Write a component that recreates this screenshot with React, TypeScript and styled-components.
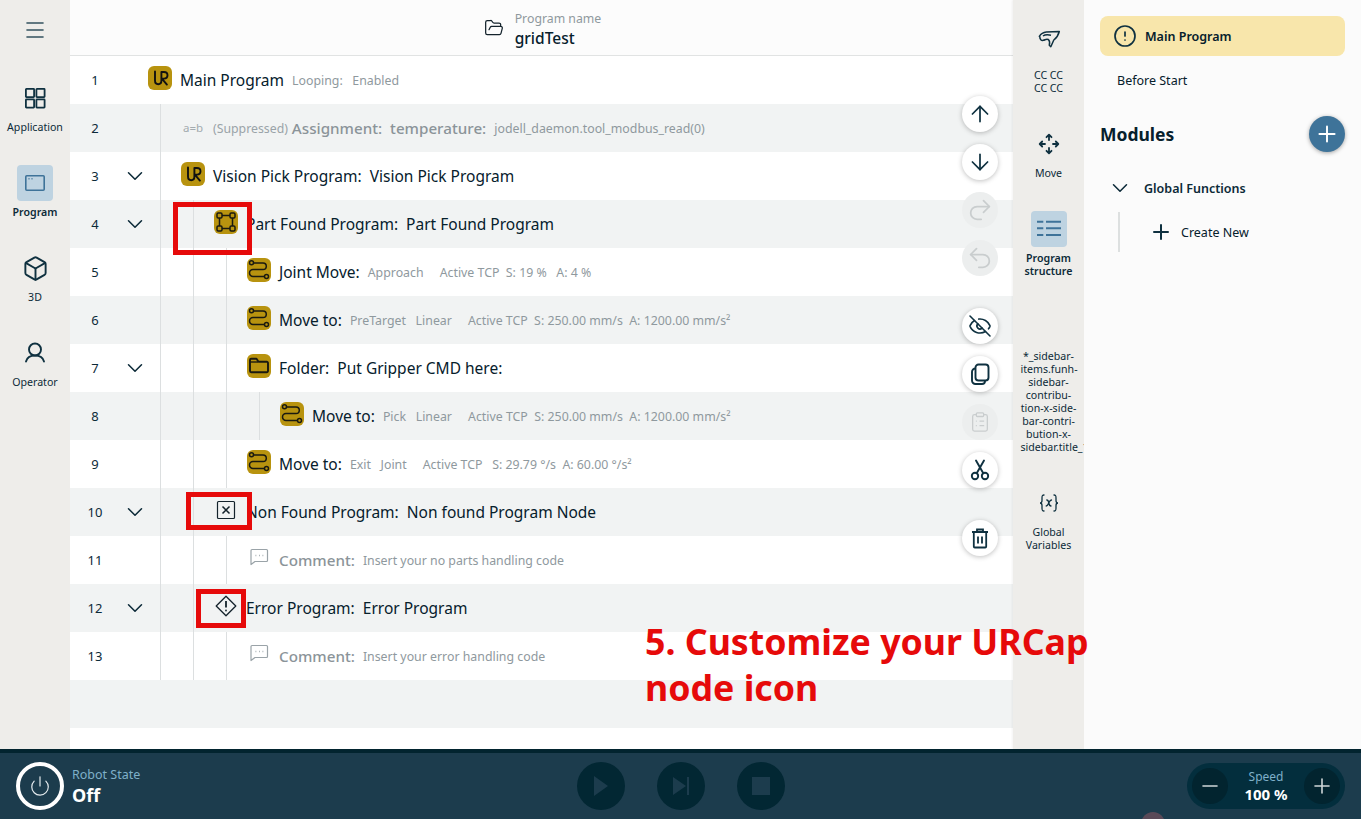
import React, { FC, ReactNode } from 'react';
import styled, { createGlobalStyle } from 'styled-components';
import {
  ArrowDown, ArrowUp, ChevronDown, ClipboardList, EyeOff, FolderOpen, Menu, Minus,
  Plus, Redo2, Undo2, Box, AlertCircle, Power,
} from 'lucide-react';

const GlobalStyle = createGlobalStyle`
  html, body {
    margin: 0;
    padding: 0;
    height: 100%;
    overflow: hidden;
  }
  body {
    font-family: "Noto Sans", "Open Sans", sans-serif;
    color: #06202c;
  }
`;

const ink = '#0f3140';

const UrLogo = () => (
  <svg width="24" height="24" viewBox="0 0 24 24" fill="none" stroke="#111" strokeWidth="1.9" strokeLinecap="round" strokeLinejoin="round">
    <path d="M7 5.500v9c0 2.500 1.300 3.700 3.200 3.700s3.200-1.200 3.200-3.700V6h2.500c2.400 0 3.600 1.300 3.600 3.300s-1.200 3.300-3.600 3.300h-2l5 6" />
  </svg>
);

const GridNodeGlyph = () => (
  <svg width="24" height="24" viewBox="0 0 24 24" fill="none" stroke="#1a1a10" strokeWidth="1.5">
    <path d="M5.500 8v8M18.500 8v8M8 5.500h8M8 18.500h8" />
    <rect x="3" y="3" width="5" height="5" rx="1.200" />
    <rect x="16" y="3" width="5" height="5" rx="1.200" />
    <rect x="3" y="16" width="5" height="5" rx="1.200" />
    <rect x="16" y="16" width="5" height="5" rx="1.200" />
  </svg>
);

const PathGlyph = () => (
  <svg width="24" height="24" viewBox="0 0 24 24" fill="none" stroke="#1a1a10" strokeWidth="1.5">
    <circle cx="4.500" cy="4.800" r="2" />
    <circle cx="19.500" cy="18.500" r="2" />
    <path d="M6.500 5h9.500a3.300 3.300 0 0 1 0 6.600H6a3.500 3.500 0 0 0 0 7h11.500" />
  </svg>
);

const FolderGlyph = () => (
  <svg width="24" height="24" viewBox="0 0 24 24" fill="none" stroke="#1a1a10" strokeWidth="1.9" strokeLinejoin="round">
    <path d="M3 6a1.200 1.200 0 0 1 1.200-1.200h5.300l2 3h8.300a1.200 1.200 0 0 1 1.200 1.200v8a1.200 1.200 0 0 1-1.200 1.200H4.200A1.200 1.200 0 0 1 3 17z" />
    <path d="M3 8h8" strokeWidth="1.400" />
  </svg>
);

const CloseBoxGlyph = () => (
  <svg width="24" height="24" viewBox="0 0 24 24" fill="none" stroke="#14232c" strokeWidth="1.200">
    <rect x="3.500" y="3.500" width="17" height="17" rx="1" />
    <path d="M8.500 8.500l7 7M15.500 8.500l-7 7" strokeWidth="1.500" />
  </svg>
);

const DiamondGlyph = () => (
  <svg width="24" height="24" viewBox="0 0 24 24" fill="none" stroke="#14232c" strokeWidth="1.300" strokeLinejoin="round">
    <path d="M12 2.200l9.800 9.800-9.800 9.800-9.800-9.800z" />
    <path d="M12 7v6.500" strokeWidth="1.800" />
    <circle cx="12" cy="16.500" r="0.900" fill="#14232c" stroke="none" />
  </svg>
);

const CommentGlyph = () => (
  <svg width="24" height="24" viewBox="0 0 24 24" fill="none" stroke="#9aa3a8" strokeWidth="1.200" strokeLinejoin="round">
    <path d="M5 3.500h14.500a1 1 0 0 1 1 1v10a1 1 0 0 1-1 1H8l-4 3V4.500a1 1 0 0 1 1-1z" />
    <path d="M8.500 9.500h.8M12 9.500h.8M15.500 9.500h.8" strokeWidth="1.400" />
  </svg>
);

const ApplicationGlyph = () => (
  <svg width="24" height="24" viewBox="0 0 24 24" fill="none" stroke={ink} strokeWidth="1.800">
    <rect x="2.900" y="2.900" width="8.200" height="8.200" rx="0.500" />
    <rect x="13.400" y="2.900" width="8.200" height="8.200" rx="0.500" />
    <rect x="2.900" y="13.400" width="8.200" height="8.200" rx="0.500" />
    <rect x="13.400" y="13.400" width="8.200" height="8.200" rx="0.500" />
  </svg>
);

const ProgramGlyph = () => (
  <svg width="24" height="24" viewBox="0 0 24 24" fill="none" stroke="#3e7399" strokeWidth="1.600">
    <rect x="2.800" y="4.800" width="18.400" height="14.400" rx="1" />
    <path d="M5.500 7.800h1M8.500 7.800h1" strokeWidth="1.500" />
  </svg>
);

const OperatorGlyph = () => (
  <svg width="24" height="24" viewBox="0 0 24 24" fill="none" stroke={ink} strokeWidth="1.900" strokeLinecap="round">
    <circle cx="12" cy="8.500" r="6" />
    <path d="M3 20.500c1-4 5-6 9-6s8 2 9 6" />
  </svg>
);

const GripperGlyph = () => (
  <svg width="24" height="24" viewBox="0 0 24 24" fill="none" stroke={ink} strokeWidth="1.500" strokeLinejoin="round">
    <path d="M2.300 8.300c2-3 5-4 7-4.200l13-.6c-1 4-3.500 7-5.500 8.500l-3 6.700-1.500-1.500c.5-2 .5-4.500-1-5.700-2-1-3 .3-5 .8s-3.500-1-3.500-3.500z" />
    <path d="M6 8c2-1.500 5-1.500 8-.8" />
  </svg>
);

const MoveGlyph = () => (
  <svg width="24" height="24" viewBox="0 0 24 24" fill="none" stroke={ink} strokeWidth="1.800" strokeLinecap="round" strokeLinejoin="round">
    <path d="M12 3v5M9.500 5.200L12 2.700l2.500 2.500" />
    <path d="M12 21v-5M9.500 18.800l2.500 2.500 2.500-2.500" />
    <path d="M3 12h5M5.200 9.500L2.700 12l2.500 2.500" />
    <path d="M21 12h-5M18.800 9.500l2.500 2.500-2.500 2.500" />
  </svg>
);

const StructureGlyph = () => (
  <svg width="24" height="24" viewBox="0 0 24 24" fill="none" stroke="#3e7399" strokeWidth="2">
    <path d="M0 4.700h6.300M9 4.700h15M0 11.300h6.300M9 11.300h15M0 18h6.300M9 18h15" />
  </svg>
);

const VariablesGlyph = () => (
  <svg width="24" height="24" viewBox="0 0 24 24" fill="none" stroke={ink} strokeWidth="1.300" strokeLinecap="round">
    <path d="M7 4c-2 0-2 1-2 3v2.500c0 1.500-.6 2.500-2 2.500 1.400 0 2 1 2 2.500V17c0 2 0 3 2 3" />
    <path d="M17 4c2 0 2 1 2 3v2.500c0 1.500.6 2.500 2 2.500-1.400 0-2 1-2 2.500V17c0 2 0 3-2 3" />
    <path d="M9.800 9c1.500 0 1.600 1 2 3s.6 3 2.200 3M14.500 9c-1.500 0-2.500 2.500-2.800 3-.3.500-1 3-2.500 3" />
  </svg>
);

const CopyGlyph = () => (
  <svg width="24" height="24" viewBox="0 0 24 24" fill="none" stroke="currentColor" strokeWidth="1.900">
    <path d="M10.500 2.500h7a3 3 0 0 1 3 3v10a3 3 0 0 1-3 3h-7a3 3 0 0 1-3-3v-10a3 3 0 0 1 3-3z" />
    <path d="M7.500 6.500a3.500 3.500 0 0 0-3.500 3.500v8.500a3.500 3.500 0 0 0 3.500 3.500h6.500a3 3 0 0 0 3-3" />
  </svg>
);

const ScissorsGlyph = () => (
  <svg width="24" height="24" viewBox="0 0 24 24" fill="none" stroke="currentColor" strokeWidth="1.900" strokeLinecap="round">
    <circle cx="7" cy="18" r="3.200" />
    <circle cx="17" cy="18" r="3.200" />
    <path d="M8.700 15.300L16 2.500M15.300 15.300L8 2.500" />
  </svg>
);

const TrashGlyph = () => (
  <svg width="24" height="24" viewBox="0 0 24 24" fill="none" stroke="currentColor" strokeWidth="1.800">
    <path d="M4 6h16M9 6V3.500h6V6" />
    <path d="M5.800 6v14.500a1 1 0 0 0 1 1h10.400a1 1 0 0 0 1-1V6" />
    <path d="M10 10.500v7M14 10.500v7" />
  </svg>
);

const Page = styled.div`
  width: 1361px;
  height: 819px;
  display: grid;
  grid-template-columns: 70px 943px 71px 277px;
  grid-template-rows: 749px 70px;
  position: relative;
  overflow: hidden;
  background: #fff;
`;

const LeftRail = styled.nav`
  background: #eeedea;
  display: flex;
  flex-direction: column;
  align-items: center;
`;

const MenuButton = styled.div`
  height: 60px;
  margin-bottom: 20px;
  display: flex;
  align-items: center;
  color: #33525f;
`;

const RailItem = styled.div`
  height: 85px;
  width: 100%;
  display: flex;
  flex-direction: column;
  align-items: center;
`;

const RailIcon = styled.div<{ $active?: boolean }>`
  width: 36px;
  height: 36px;
  border-radius: 4px;
  display: flex;
  align-items: center;
  justify-content: center;
  background: ${p => (p.$active ? '#bed3e1' : 'transparent')};
`;

const RailLabel = styled.div<{ $active?: boolean }>`
  margin-top: 5px;
  font-size: 10.600px;
  line-height: 13px;
  text-align: center;
  font-weight: ${p => (p.$active ? 600 : 400)};
  color: #0c2a38;
`;

const Main = styled.main`
  display: flex;
  flex-direction: column;
  position: relative;
  min-width: 0;
`;

const Header = styled.header`
  height: 55px;
  flex: none;
  background: #fcfcfc;
  border-bottom: 1px solid #e1e3e3;
  display: flex;
  justify-content: center;
  align-items: center;
  gap: 11px;
  padding-left: 2px;
`;

const HeaderText = styled.div`
  display: flex;
  flex-direction: column;
  padding-top: 4px;
`;

const HeaderCaption = styled.span`
  font-size: 12.300px;
  line-height: 16px;
  color: #8f999e;
`;

const HeaderName = styled.span`
  font-size: 15.500px;
  line-height: 22px;
  font-weight: 500;
  color: #06202c;
`;

const RowList = styled.div`
  display: flex;
  flex-direction: column;
`;

const Row = styled.div<{ $shaded: boolean }>`
  height: 48px;
  display: flex;
  align-items: stretch;
  background: ${p => (p.$shaded ? '#f1f3f3' : '#fff')};
`;

const RowNumber = styled.div`
  width: 50px;
  display: flex;
  align-items: center;
  justify-content: center;
  font-size: 13px;
  color: #0c2a38;
`;

const Chevron = styled.div`
  width: 40px;
  padding-left: 2px;
  box-sizing: border-box;
  display: flex;
  align-items: center;
  color: #0c2a38;
`;

const Guide = styled.div`
  width: 33px;
  flex: none;
  box-sizing: border-box;
  border-left: 1px solid #dcdfe0;
`;

const NodeSlot = styled.div`
  display: flex;
  align-items: center;
  gap: 8px;
  margin-left: -12px;
  min-width: 0;
  white-space: pre;
`;

const NodeIcon = styled.div<{ $gold?: boolean }>`
  width: 24px;
  height: 24px;
  flex: none;
  margin-top: -4px;
  border-radius: 6px;
  background: ${p => (p.$gold ? '#b8930f' : 'transparent')};
  display: flex;
  align-items: center;
  justify-content: center;
`;

const NodeBody = styled.div`
  display: flex;
  align-items: center;
`;

const FormulaGlyph = styled.span`
  font-size: 11.500px;
  margin-top: 2px;
  color: #a3abaf;
`;

const Title = styled.span`
  font-size: 15.500px;
  color: #06202c;
`;

const Meta = styled.span`
  font-size: 12.350px;
  color: #8f999e;
  margin-left: 8px;
`;

const Suppressed = styled.span`
  font-size: 12.300px;
  color: #9aa3a8;
`;

const Muted = styled.span`
  font-size: 15.200px;
  font-weight: 500;
  color: #8b9499;
`;

const FloatColumn = styled.div`
  position: absolute;
  top: 96px;
  right: 15px;
  display: flex;
  flex-direction: column;
  gap: 12px;
`;

const FloatButton = styled.div<{ $off?: boolean; $gapTop?: boolean }>`
  width: 36px;
  height: 36px;
  border-radius: 50%;
  display: flex;
  align-items: center;
  justify-content: center;
  margin-top: ${p => (p.$gapTop ? '20px' : '0')};
  background: ${p => (p.$off ? '#eceeee' : '#fff')};
  box-shadow: ${p => (p.$off ? 'none' : '0 1px 5px rgba(0, 0, 0, 0.25)')};
  color: ${p => (p.$off ? '#c9cdce' : ink)};
`;

const RightRail = styled.aside`
  background: #eeedea;
  box-shadow: -1px 0 2px rgba(0, 0, 0, 0.05);
  z-index: 1;
  display: flex;
  flex-direction: column;
  align-items: center;
  padding-top: 28px;
  box-sizing: border-box;
  overflow: hidden;
`;

const ToolItem = styled.div<{ $height: number }>`
  height: ${p => p.$height}px;
  width: 100%;
  display: flex;
  flex-direction: column;
  align-items: center;
  flex: none;
`;

const ToolLabel = styled.div<{ $active?: boolean; $top?: number }>`
  margin-top: ${p => p.$top ?? 5}px;
  font-size: 10.600px;
  line-height: 13px;
  text-align: center;
  white-space: nowrap;
  font-weight: ${p => (p.$active ? 600 : 400)};
  color: #0c2a38;
`;

const LongToolLabel = styled(ToolLabel)`
  width: 56px;
`;

const SidePanel = styled.aside`
  background: #fbfbfb;
  padding: 16px 16px 0;
  display: flex;
  flex-direction: column;
`;

const MainTab = styled.div`
  height: 40px;
  background: #f8e6ab;
  border-radius: 8px;
  display: flex;
  align-items: center;
  gap: 8px;
  padding-left: 13px;
  font-size: 12.500px;
  font-weight: 600;
`;

const BeforeStart = styled.div`
  height: 48px;
  display: flex;
  align-items: center;
  padding-left: 17px;
  font-size: 12.500px;
`;

const ModulesHead = styled.div`
  margin-top: 12px;
  height: 36px;
  display: flex;
  align-items: center;
  justify-content: space-between;
  font-size: 17.500px;
  font-weight: 700;
`;

const AddButton = styled.div`
  width: 36px;
  height: 36px;
  border-radius: 50%;
  background: #3e7399;
  box-shadow: 0 1px 4px rgba(0, 0, 0, 0.35);
  color: #fff;
  display: flex;
  align-items: center;
  justify-content: center;
`;

const GroupHead = styled.div`
  margin-top: 18px;
  height: 36px;
  display: flex;
  align-items: center;
  gap: 11px;
  padding-left: 7px;
  font-size: 12.500px;
  font-weight: 600;
  color: #0c2a38;
`;

const GroupBody = styled.div`
  margin: 6px 0 0 18px;
  height: 40px;
  border-left: 2px solid #dde0e0;
  display: flex;
  align-items: center;
  gap: 8px;
  padding-left: 29px;
  font-size: 12.500px;
`;

const BottomBar = styled.footer`
  grid-column: 1 / -1;
  background: #1c3c4d;
  border-top: 4px solid #02242f;
  box-sizing: border-box;
  display: grid;
  grid-template-columns: 1fr auto 1fr;
  align-items: center;
  padding: 0 16px;
  position: relative;
  overflow: hidden;
  z-index: 2;
`;

const RobotState = styled.div`
  display: flex;
  align-items: center;
  gap: 8px;
`;

const PowerRing = styled.div`
  width: 48px;
  height: 48px;
  box-sizing: border-box;
  border: 4px solid #fff;
  border-radius: 50%;
  color: #e6ecef;
  display: flex;
  align-items: center;
  justify-content: center;
`;

const StateText = styled.div`
  display: flex;
  flex-direction: column;
  margin-top: 2px;
`;

const StateCaption = styled.span`
  font-size: 12.500px;
  line-height: 16px;
  color: #7fb0c9;
`;

const StateValue = styled.span`
  font-size: 18px;
  line-height: 24px;
  font-weight: 700;
  color: #fff;
`;

const Transport = styled.div`
  display: flex;
  gap: 32px;
`;

const TransportButton = styled.div`
  width: 48px;
  height: 48px;
  border-radius: 50%;
  background: #022733;
  color: #1c3c4d;
  display: flex;
  align-items: center;
  justify-content: center;
`;

const SpeedPill = styled.div`
  justify-self: end;
  width: 158px;
  height: 46px;
  box-sizing: border-box;
  padding: 0 5px;
  border-radius: 23px;
  background: #032e3d;
  display: flex;
  align-items: center;
  justify-content: space-between;
`;

const SpeedButton = styled.div`
  width: 36px;
  height: 36px;
  border-radius: 50%;
  background: #02242f;
  color: #cfd6d9;
  display: flex;
  align-items: center;
  justify-content: center;
`;

const SpeedText = styled.div`
  display: flex;
  flex-direction: column;
  align-items: center;
`;

const SpeedCaption = styled.span`
  font-size: 12px;
  line-height: 16px;
  color: #7fb0c9;
`;

const SpeedValue = styled.span`
  font-size: 15px;
  line-height: 18px;
  font-weight: 700;
  color: #fff;
`;

const CursorBlob = styled.div`
  position: absolute;
  left: 1141px;
  top: 59px;
  width: 24px;
  height: 24px;
  border-radius: 50%;
  background: #5a4a58;
`;

const Marker = styled.div<{ $x: number; $y: number; $w: number; $h: number }>`
  position: absolute;
  left: ${p => p.$x}px;
  top: ${p => p.$y}px;
  width: ${p => p.$w}px;
  height: ${p => p.$h}px;
  box-sizing: border-box;
  border: 5px solid #e60a0a;
  z-index: 3;
`;

const Callout = styled.div`
  position: absolute;
  left: 645px;
  top: 618px;
  font-size: 35.700px;
  line-height: 46px;
  font-weight: 700;
  color: #e60a0a;
  white-space: nowrap;
  z-index: 3;
`;

interface NodeRow {
  n: number;
  depth: number;
  open?: boolean;
  icon?: ReactNode;
  gold?: boolean;
  body: ReactNode;
}

const rows: NodeRow[] = [
  { n: 1, depth: 0, icon: <UrLogo />, gold: true, body: <><Title>Main Program</Title><Meta>{'Looping:   Enabled'}</Meta></> },
  { n: 2, depth: 1, icon: <FormulaGlyph>a=b</FormulaGlyph>, body: <><Suppressed>(Suppressed)</Suppressed><Muted>{' Assignment:  temperature:'}</Muted><Meta>jodell_daemon.tool_modbus_read(0)</Meta></> },
  { n: 3, depth: 1, open: true, icon: <UrLogo />, gold: true, body: <Title>{'Vision Pick Program:  Vision Pick Program'}</Title> },
  { n: 4, depth: 2, open: true, icon: <GridNodeGlyph />, gold: true, body: <Title>{'Part Found Program:  Part Found Program'}</Title> },
  { n: 5, depth: 3, icon: <PathGlyph />, gold: true, body: <><Title>Joint Move:</Title><Meta>{'Approach     Active TCP  S: 19 %   A: 4 %'}</Meta></> },
  { n: 6, depth: 3, icon: <PathGlyph />, gold: true, body: <><Title>Move to:</Title><Meta>{'PreTarget   Linear     Active TCP  S: 250.00 mm/s  A: 1200.00 mm/s²'}</Meta></> },
  { n: 7, depth: 3, open: true, icon: <FolderGlyph />, gold: true, body: <Title>{'Folder:  Put Gripper CMD here:'}</Title> },
  { n: 8, depth: 4, icon: <PathGlyph />, gold: true, body: <><Title>Move to:</Title><Meta>{'Pick   Linear     Active TCP  S: 250.00 mm/s  A: 1200.00 mm/s²'}</Meta></> },
  { n: 9, depth: 3, icon: <PathGlyph />, gold: true, body: <><Title>Move to:</Title><Meta>{'Exit   Joint     Active TCP   S: 29.79 °/s  A: 60.00 °/s²'}</Meta></> },
  { n: 10, depth: 2, open: true, icon: <CloseBoxGlyph />, body: <Title>{'Non Found Program:  Non found Program Node'}</Title> },
  { n: 11, depth: 3, icon: <CommentGlyph />, body: <><Muted>Comment:</Muted><Meta>Insert your no parts handling code</Meta></> },
  { n: 12, depth: 2, open: true, icon: <DiamondGlyph />, body: <Title>{'Error Program:  Error Program'}</Title> },
  { n: 13, depth: 3, icon: <CommentGlyph />, body: <><Muted>Comment:</Muted><Meta>Insert your error handling code</Meta></> },
];

const floatButtons: { icon: ReactNode; off?: boolean; gapTop?: boolean }[] = [
  { icon: <ArrowUp size={26} strokeWidth={1.600} /> },
  { icon: <ArrowDown size={26} strokeWidth={1.600} /> },
  { icon: <Redo2 size={28} strokeWidth={1.500} />, off: true },
  { icon: <Undo2 size={28} strokeWidth={1.500} />, off: true },
  { icon: <EyeOff size={24} strokeWidth={1.600} />, gapTop: true },
  { icon: <CopyGlyph /> },
  { icon: <ClipboardList size={22} strokeWidth={1.400} />, off: true },
  { icon: <ScissorsGlyph /> },
  { icon: <TrashGlyph />, gapTop: true },
];

const sidebarTitle = ['*_sidebar-', 'items.funh-', 'sidebar-', 'contribu-', 'tion-x-side-', 'bar-contri-', 'bution-x-', 'sidebar.title_1'];

export const App: FC = () => (
  <Page>
    <GlobalStyle />

    <LeftRail>
      <MenuButton><Menu size={24} strokeWidth={1.600} /></MenuButton>
      <RailItem>
        <RailIcon><ApplicationGlyph /></RailIcon>
        <RailLabel>Application</RailLabel>
      </RailItem>
      <RailItem>
        <RailIcon $active><ProgramGlyph /></RailIcon>
        <RailLabel $active>Program</RailLabel>
      </RailItem>
      <RailItem>
        <RailIcon><Box size={27} color={ink} strokeWidth={1.700} /></RailIcon>
        <RailLabel>3D</RailLabel>
      </RailItem>
      <RailItem>
        <RailIcon><OperatorGlyph /></RailIcon>
        <RailLabel>Operator</RailLabel>
      </RailItem>
    </LeftRail>

    <Main>
      <Header>
        <FolderOpen size={20} color="#14232c" strokeWidth={1.500} />
        <HeaderText>
          <HeaderCaption>Program name</HeaderCaption>
          <HeaderName>gridTest</HeaderName>
        </HeaderText>
      </Header>
      <RowList>
        {rows.map((r, i) => (
          <Row key={r.n} $shaded={i % 2 === 1}>
            <RowNumber>{r.n}</RowNumber>
            <Chevron>{r.open && <ChevronDown size={26} strokeWidth={1.400} />}</Chevron>
            {Array.from({ length: r.depth }).map((_, g) => <Guide key={g} />)}
            <NodeSlot>
              <NodeIcon $gold={r.gold}>{r.icon}</NodeIcon>
              <NodeBody>{r.body}</NodeBody>
            </NodeSlot>
          </Row>
        ))}
        <Row $shaded />
      </RowList>
      <FloatColumn>
        {floatButtons.map((b, i) => (
          <FloatButton key={i} $off={b.off} $gapTop={b.gapTop}>{b.icon}</FloatButton>
        ))}
      </FloatColumn>
    </Main>

    <RightRail>
      <ToolItem $height={104}>
        <GripperGlyph />
        <ToolLabel $top={17}>CC CC<br />CC CC</ToolLabel>
      </ToolItem>
      <ToolItem $height={79}>
        <MoveGlyph />
        <ToolLabel $top={11}>Move</ToolLabel>
      </ToolItem>
      <ToolItem $height={139}>
        <RailIcon $active><StructureGlyph /></RailIcon>
        <ToolLabel $active>Program<br />structure</ToolLabel>
      </ToolItem>
      <ToolItem $height={141}>
        <LongToolLabel $top={0}>{sidebarTitle.map(l => <div key={l}>{l}</div>)}</LongToolLabel>
      </ToolItem>
      <ToolItem $height={70}>
        <VariablesGlyph />
        <ToolLabel $top={11}>Global<br />Variables</ToolLabel>
      </ToolItem>
    </RightRail>

    <SidePanel>
      <MainTab><AlertCircle size={24} color={ink} strokeWidth={1.700} />Main Program</MainTab>
      <BeforeStart>Before Start</BeforeStart>
      <ModulesHead>Modules<AddButton><Plus size={26} strokeWidth={1.800} /></AddButton></ModulesHead>
      <GroupHead><ChevronDown size={26} strokeWidth={1.400} />Global Functions</GroupHead>
      <GroupBody><Plus size={24} color={ink} strokeWidth={2} />Create New</GroupBody>
    </SidePanel>

    <BottomBar>
      <RobotState>
        <PowerRing><Power size={22} strokeWidth={1.300} /></PowerRing>
        <StateText>
          <StateCaption>Robot State</StateCaption>
          <StateValue>Off</StateValue>
        </StateText>
      </RobotState>
      <Transport>
        <TransportButton>
          <svg width="24" height="24" viewBox="0 0 24 24" fill="currentColor"><path d="M5 2l14 10-14 10z" /></svg>
        </TransportButton>
        <TransportButton>
          <svg width="24" height="24" viewBox="0 0 24 24" fill="currentColor"><path d="M4 3l13 9-13 9zM18 3h2v18h-2z" /></svg>
        </TransportButton>
        <TransportButton>
          <svg width="24" height="24" viewBox="0 0 24 24" fill="currentColor"><rect x="3" y="3" width="18" height="18" /></svg>
        </TransportButton>
      </Transport>
      <SpeedPill>
        <SpeedButton><Minus size={24} strokeWidth={1.600} /></SpeedButton>
        <SpeedText>
          <SpeedCaption>Speed</SpeedCaption>
          <SpeedValue>100 %</SpeedValue>
        </SpeedText>
        <SpeedButton><Plus size={24} strokeWidth={1.600} /></SpeedButton>
      </SpeedPill>
      <CursorBlob />
    </BottomBar>

    <Marker $x={173} $y={202} $w={79} $h={53} />
    <Marker $x={186} $y={492} $w={66} $h={38} />
    <Marker $x={196} $y={589} $w={50} $h={39} />
    <Callout>5. Customize your URCap<br />node icon</Callout>
  </Page>
);

export default App;
